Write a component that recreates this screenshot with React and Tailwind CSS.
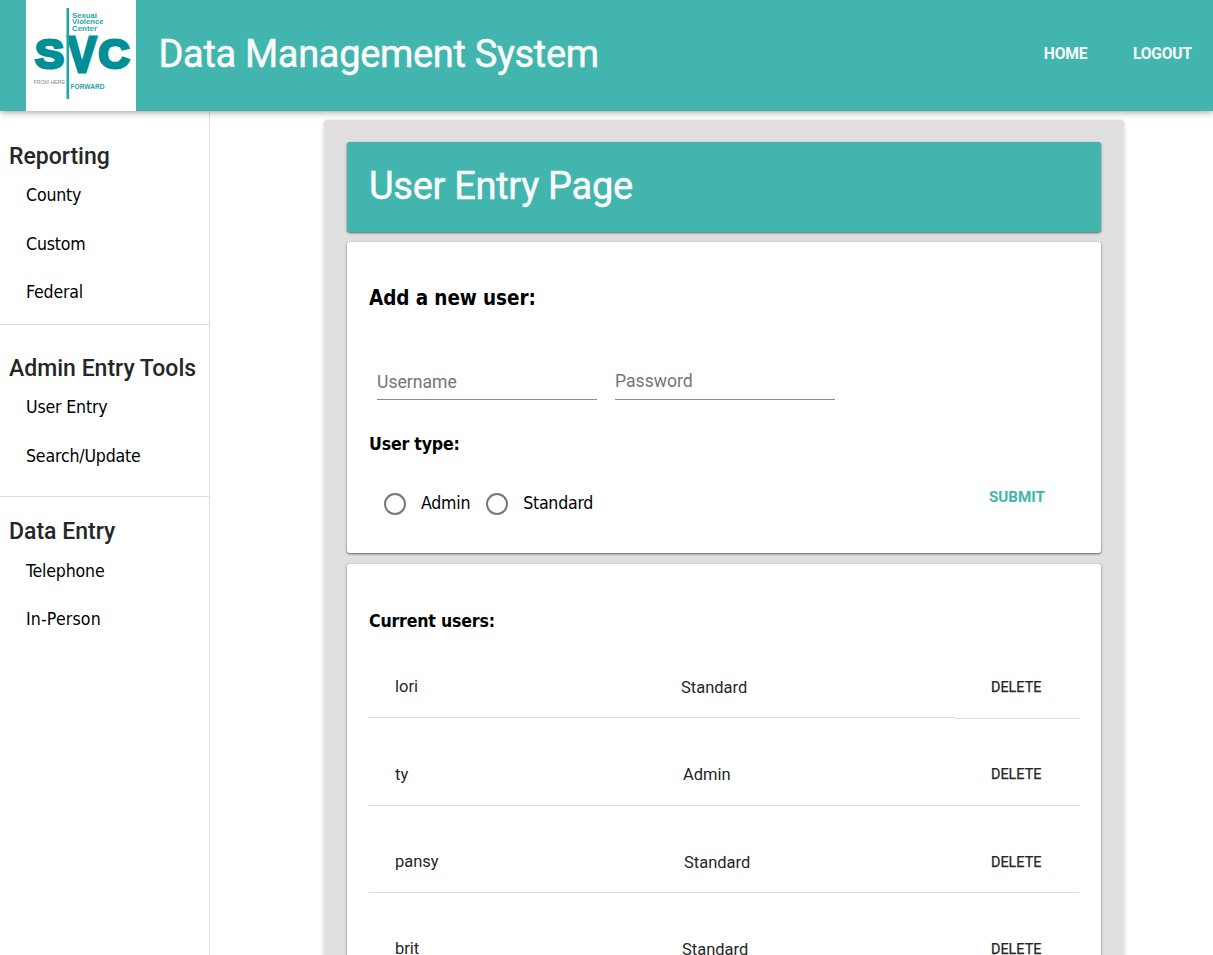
import React from "react";

const TAHOMA = "font-['DejaVu_Sans_Condensed','DejaVu_Sans',sans-serif] [font-stretch:condensed]";
const CARD = "rounded-[3px] shadow-[0_1px_3px_rgba(0,0,0,0.3),0_1px_2px_rgba(0,0,0,0.35)]";

function Logo() {
  return (
    <svg className="ml-[26px] h-[111px] w-[110px] shrink-0 bg-white" viewBox="26 0 110 111">
      <g fill="#008e97" stroke="#008e97" strokeWidth="3" strokeLinejoin="miter" fontFamily="Liberation Sans, sans-serif" fontWeight="700">
        <text x="35" y="68" fontSize="40" textLength="29" lengthAdjust="spacingAndGlyphs">S</text>
        <text x="67.5" y="71.5" fontSize="50" textLength="29" lengthAdjust="spacingAndGlyphs">V</text>
        <text x="98.5" y="68" fontSize="40" textLength="31" lengthAdjust="spacingAndGlyphs">C</text>
      </g>
      <rect x="66.5" y="8" width="2.6" height="91" fill="#22a5a8" />
      <g fill="#2aa5a9" fontFamily="Liberation Sans, sans-serif" fontWeight="700" fontSize="7">
        <text x="72" y="17.5" textLength="25" lengthAdjust="spacingAndGlyphs">Sexual</text>
        <text x="72" y="24.3" textLength="31.5" lengthAdjust="spacingAndGlyphs">Violence</text>
        <text x="72" y="31" textLength="25" lengthAdjust="spacingAndGlyphs">Center</text>
        <text x="70.5" y="88.5" fontSize="6.8" textLength="34" lengthAdjust="spacingAndGlyphs">FORWARD</text>
      </g>
      <text x="33.5" y="83.8" fill="#8a8a8a" fontFamily="Liberation Sans, sans-serif" fontSize="5.8" textLength="31.5" lengthAdjust="spacingAndGlyphs">FROM HERE</text>
    </svg>
  );
}

function NavGroup({ title, items, className }) {
  return (
    <section className={className}>
      <h2 className="pl-[9px] text-[23px] leading-[30px] font-medium whitespace-nowrap text-[#262626]">{title}</h2>
      <ul className={"-mt-px pl-[26px] text-[17.6px] text-black tracking-[-0.18px] " + TAHOMA}>
        {items.map((item) => (
          <li
            key={item}
            className={
              "h-[48.5px] " +
              (item === "Telephone" ? "leading-[50.5px]" : "leading-[48.5px]") +
              (item === "In-Person" ? " tracking-[0.15px]" : "")
            }
          >
            {item}
          </li>
        ))}
      </ul>
    </section>
  );
}

function Radio({ label }) {
  return (
    <label className="flex items-center">
      <span className="mt-px h-[22px] w-[22px] rounded-full border-2 border-[#757575]" />
      <span className={"ml-[15px] text-[17.6px] leading-[26px] tracking-[-0.25px] " + TAHOMA}>{label}</span>
    </label>
  );
}

const USERS = [
  { name: "lori", type: "Standard", pad: "pl-[26px]" },
  { name: "ty", type: "Admin", pad: "pl-[28px]" },
  { name: "pansy", type: "Standard", pad: "pl-[29px]" },
  { name: "brit", type: "Standard", pad: "pl-[27px]" },
];

export default function App() {
  return (
    <div className="flex h-[955px] w-[1213px] flex-col overflow-hidden bg-white font-[Roboto,sans-serif]">
      <header className="relative z-10 flex h-[111px] shrink-0 items-center bg-[#42b6ae] shadow-[0_1px_7px_rgba(0,0,0,0.4)]">
        <Logo />
        <h1 className="ml-[22.5px] pb-[3px] text-[38px] leading-[46px] tracking-[-0.33px] whitespace-nowrap text-[#fafafa] [-webkit-text-stroke:0.5px_#fafafa]">Data Management System</h1>
        <nav className="mr-[21px] ml-auto flex gap-[45.5px] pb-[4px] text-[15.6px] leading-[20px] font-bold tracking-[-0.15px] text-[#fafafa]">
          <a>HOME</a>
          <a>LOGOUT</a>
        </nav>
      </header>
      <div className="flex min-h-0 flex-1">
        <aside className="w-[210px] shrink-0 border-r border-[#dedede]">
          <NavGroup title="Reporting" items={["County", "Custom", "Federal"]} className="h-[214px] border-b border-[#dedede] pt-[31px]" />
          <NavGroup title="Admin Entry Tools" items={["User Entry", "Search/Update"]} className="h-[172px] border-b border-[#dedede] pt-[29px]" />
          <NavGroup title="Data Entry" items={["Telephone", "In-Person"]} className="pt-[20px]" />
        </aside>
        <main className="mt-[9px] ml-[114px] flex h-[860px] w-[800px] flex-col rounded-[4px] bg-[#e0e0e0] px-[23px] pt-[22px] shadow-[0_1px_4px_rgba(0,0,0,0.2)]">
          <div className={"flex h-[89.5px] shrink-0 items-center bg-[#42b6ae] pl-[22px] " + CARD}>
            <h2 className="pb-[2px] text-[38px] leading-[46px] tracking-[-0.3px] text-[#fafafa] [-webkit-text-stroke:0.5px_#fafafa]">User Entry Page</h2>
          </div>
          <section className={"mt-[10.5px] flex h-[311px] shrink-0 flex-col bg-white px-[22px] text-black " + CARD}>
            <h3 className={"mt-[42px] text-[20.5px] leading-[28px] font-bold tracking-[-0.1px] " + TAHOMA}>Add a new user:</h3>
            <div className="mt-[50px] ml-[8px] flex gap-[18px] text-[17.6px] text-[#757575]">
              <div className="h-[38px] w-[220px] border-b border-[#8c8c8c] leading-[41px]">Username</div>
              <div className="h-[38px] w-[220px] border-b border-[#8c8c8c] leading-[39px]">Password</div>
            </div>
            <h4 className={"mt-[31px] text-[17.6px] leading-[26px] font-bold tracking-[-0.2px] " + TAHOMA}>User type:</h4>
            <div className="mt-[32px] ml-[15px] flex h-[28px] items-center gap-[16px]">
              <Radio label="Admin" />
              <Radio label="Standard" />
              <button className="mr-[34px] mb-[13px] ml-auto text-[15.2px] leading-[20px] font-bold text-[#42b6ae]">SUBMIT</button>
            </div>
          </section>
          <section className={"mt-[11px] h-[500px] shrink-0 bg-white px-[22px] " + CARD}>
            <h4 className={"pt-[44px] text-[17.6px] leading-[26px] font-bold tracking-[-0.2px] text-black " + TAHOMA}>Current users:</h4>
            <div className="mt-[21px] text-[16.5px] text-[#262626]">
              {USERS.map((u, i) => (
                <div key={u.name} className="grid h-[87.5px] grid-cols-[286px_300px_124px] leading-[63px]">
                  <span className={"h-[63px] border-b border-[#dedede] pl-[26px] " + (i === 3 ? "leading-[62px]" : "")}>{u.name}</span>
                  <span className={"h-[63px] border-b border-[#dedede] " + (i % 2 ? "leading-[64px] " : "leading-[65px] ") + u.pad}>{u.type}</span>
                  <span className={(i === 0 ? "h-[64px]" : "h-[63px]") + " border-b border-[#dedede] pl-[36px] text-[14.4px] [-webkit-text-stroke:0.25px_#262626] " + (i % 2 ? "leading-[64px]" : "leading-[66px]")}>DELETE</span>
                </div>
              ))}
            </div>
          </section>
        </main>
      </div>
    </div>
  );
}
